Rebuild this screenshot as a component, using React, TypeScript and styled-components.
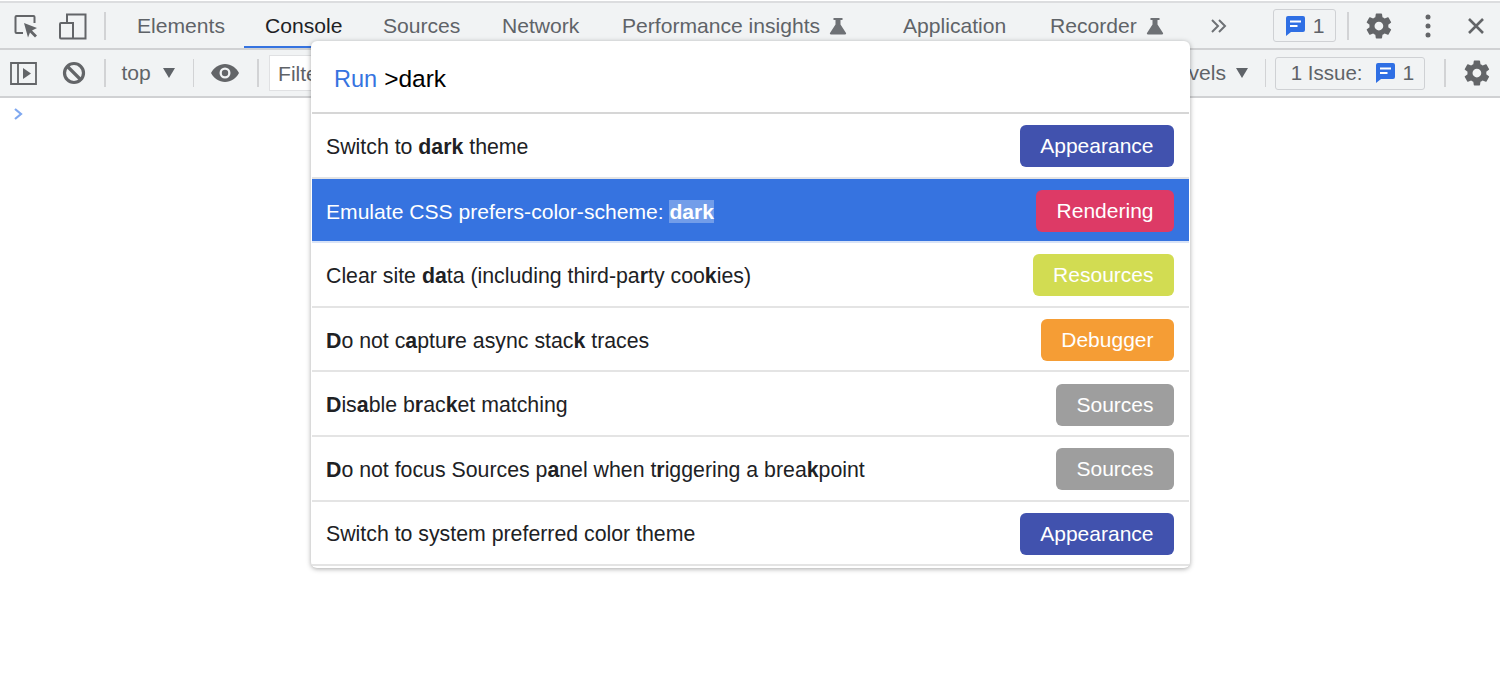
import React from 'react';
import styled, { createGlobalStyle } from 'styled-components';

const GlobalStyle = createGlobalStyle`
  html, body {
    margin: 0;
    padding: 0;
    background: #fff;
    font-family: "Liberation Sans", Arial, sans-serif;
  }
`;

const Page = styled.div`
  position: relative;
  width: 1500px;
  height: 699px;
  overflow: hidden;
  background: #fff;
`;

const Bar = styled.div<{ $height: number }>`
  display: flex;
  align-items: center;
  height: ${p => p.$height}px;
  background: #f1f3f4;
  border-bottom: 2px solid #d0d1d3;
  box-sizing: border-box;
  color: #5f6368;
  font-size: 21.1px;
`;

const TabBar = styled(Bar)`
  margin-top: 1px;
  border-top: 2px solid #dcdddf;
  padding-left: 12px;
`;

const ToolBar = styled(Bar)`
  padding: 0 8.5px 0 10px;
`;

const IconSlot = styled.span<{ $width: number; $gap?: number }>`
  display: flex;
  align-items: center;
  justify-content: center;
  flex: none;
  width: ${p => p.$width}px;
  margin-right: ${p => p.$gap ?? 0}px;
`;

const Divider = styled.span<{ $left: number; $right: number }>`
  flex: none;
  width: 1.5px;
  height: 28px;
  background: #d2d3d5;
  margin: 0 ${p => p.$right}px 0 ${p => p.$left}px;
`;

const Tabs = styled.div`
  display: flex;
  align-self: stretch;
`;

const Tab = styled.div<{ $active?: boolean; $width: number }>`
  display: flex;
  align-items: center;
  gap: 9px;
  box-sizing: border-box;
  width: ${p => p.$width}px;
  padding: 1px 0 0 21px;
  white-space: nowrap;
  color: ${p => (p.$active ? '#202124' : '#5f6368')};
  box-shadow: ${p => (p.$active ? 'inset 0 -2px 0 #3673e0' : 'none')};
`;

const Chip = styled.div<{ $width: number; $left?: number; $inset?: number }>`
  display: flex;
  align-items: center;
  justify-content: center;
  gap: 7px;
  flex: none;
  box-sizing: border-box;
  width: ${p => p.$width}px;
  height: 33px;
  margin-left: ${p => p.$left ?? 0}px;
  padding-left: ${p => p.$inset ?? 0}px;
  border: 1.5px solid #cfd1d4;
  border-radius: 3px;
`;

const IssueLabel = styled.span`
  margin-right: 5px;
  font-size: 20.5px;
`;

const ContextLabel = styled.span`
  display: flex;
  align-items: center;
  gap: 11px;
  flex: none;
  width: 71px;
`;

const FilterBox = styled.div`
  flex: none;
  box-sizing: border-box;
  width: 300px;
  height: 36px;
  padding: 6px 8px;
  background: #fff;
  border: 1px solid #e0e1e3;
  white-space: nowrap;
  overflow: hidden;
`;

const Levels = styled.span`
  display: flex;
  align-items: center;
  gap: 9px;
  flex: none;
  margin-left: auto;
`;

const Prompt = styled.div`
  padding: 9px 0 0 13px;
  height: 20px;
`;

const Palette = styled.div`
  position: absolute;
  left: 311px;
  top: 41px;
  width: 879px;
  height: 527px;
  box-sizing: border-box;
  padding: 0 1px;
  background: #fff;
  border-radius: 6px;
  box-shadow: 0 1px 5px rgba(0, 0, 0, 0.35);
`;

const QueryRow = styled.div`
  box-sizing: border-box;
  height: 73px;
  padding: 24px 0 0 22px;
  border-bottom: 2px solid #d6d6d6;
  font-size: 24.5px;
  line-height: 27px;
  color: #000;
`;

const RunLabel = styled.span`
  font-size: 23.5px;
  color: #3673e0;
  margin-right: 7px;
`;

const Row = styled.div<{ $selected?: boolean }>`
  display: flex;
  align-items: center;
  justify-content: space-between;
  box-sizing: border-box;
  height: 64.6px;
  padding: 2px 15px 0 14px;
  color: ${p => (p.$selected ? '#fff' : '#202124')};
  background: ${p => (p.$selected ? '#3673e0' : '#fff')};
  border-bottom: 2px solid ${p => (p.$selected ? '#d8e3f7' : '#e4e4e4')};
`;

const RowLabel = styled.span<{ $selected?: boolean }>`
  padding-top: 2px;
  font-size: ${p => (p.$selected ? 21.1 : 21.3)}px;
`;

const Match = styled.b<{ $highlight?: boolean }>`
  background: ${p => (p.$highlight ? 'rgba(255, 255, 255, 0.3)' : 'transparent')};
`;

const Badge = styled.span<{ $color: string }>`
  display: flex;
  align-items: center;
  height: 42px;
  padding: 0 20.5px;
  border-radius: 6px;
  font-size: 21px;
  color: #fff;
  background: ${p => p.$color};
`;

const Caret = styled.svg`
  display: block;
  width: 14px;
  height: 12px;
  fill: #5f6368;
`;

const Arrow = () => (
  <Caret viewBox="0 0 14 12">
    <path d="M1 1h12L7 11z" />
  </Caret>
);

const Flask = () => (
  <svg width="18" height="18" viewBox="0 0 18 18" fill="#6e7175">
    <path d="M4.5 1h9v2H11.5v4.5L17 16a1 1 0 0 1-1 1.500H2A1 1 0 0 1 1 16l5.500-8.500V3H4.500z" />
  </svg>
);

const Gear = () => (
  <svg width="30" height="30" viewBox="0 0 24 24" fill="#636568">
    <path d="M19.4 13c.05-.33.08-.66.08-1s-.03-.67-.08-1l2.1-1.650a.5.5 0 0 0 .12-.64l-2-3.460a.5.5 0 0 0-.61-.22l-2.490 1a7.300 7.300 0 0 0-1.730-1l-.38-2.650A.5.5 0 0 0 13.920 2h-4a.5.5 0 0 0-.49.42l-.38 2.650a7.700 7.700 0 0 0-1.730 1l-2.490-1a.5.5 0 0 0-.61.22l-2 3.460a.5.5 0 0 0 .12.64L4.440 11c-.05.33-.08.67-.08 1s.03.67.08 1l-2.100 1.650a.5.5 0 0 0-.12.64l2 3.460c.12.22.39.3.61.22l2.490-1c.52.4 1.100.73 1.730 1l.38 2.650c.04.24.25.42.49.42h4c.24 0 .45-.18.49-.42l.38-2.650a7.700 7.700 0 0 0 1.730-1l2.490 1c.22.08.49 0 .61-.22l2-3.460a.5.5 0 0 0-.12-.64zM11.920 15.500a3.500 3.500 0 1 1 0-7 3.500 3.500 0 0 1 0 7z" />
  </svg>
);

const Message = () => (
  <svg width="21" height="22" viewBox="0 0 21 22">
    <path fill="#2f6fe4" d="M3 1h15a2 2 0 0 1 2 2v12a2 2 0 0 1-2 2H6l-5 4V3a2 2 0 0 1 2-2z" />
    <path fill="#fff" d="M5 5.500h11v2H5zM5 10h7.500v2H5z" />
  </svg>
);

const tabs = [
  { name: 'Elements', width: 128 },
  { name: 'Console', width: 118, active: true },
  { name: 'Sources', width: 119 },
  { name: 'Network', width: 120 },
  { name: 'Performance insights', width: 281, flask: true },
  { name: 'Application', width: 147 },
  { name: 'Recorder', width: 179, flask: true },
];

const rows: { parts: (string | [string])[]; badge: string; color: string; selected?: boolean }[] = [
  { parts: ['Switch to ', ['dark'], ' theme'], badge: 'Appearance', color: '#4152ae' },
  { parts: ['Emulate CSS prefers-color-scheme: ', ['dark']], badge: 'Rendering', color: '#dd3a66', selected: true },
  { parts: ['Clear site ', ['da'], 'ta (including third-pa', ['r'], 'ty coo', ['k'], 'ies)'], badge: 'Resources', color: '#d2dc52' },
  { parts: [['D'], 'o not c', ['a'], 'ptu', ['r'], 'e async stac', ['k'], ' traces'], badge: 'Debugger', color: '#f59d35' },
  { parts: [['D'], 'is', ['a'], 'ble b', ['r'], 'ac', ['k'], 'et matching'], badge: 'Sources', color: '#9e9e9e' },
  { parts: [['D'], 'o not focus Sources p', ['a'], 'nel when t', ['r'], 'iggering a brea', ['k'], 'point'], badge: 'Sources', color: '#9e9e9e' },
  { parts: ['Switch to system preferred color theme'], badge: 'Appearance', color: '#4152ae' },
];

const App = () => (
  <Page>
    <GlobalStyle />
    <TabBar $height={49}>
      <IconSlot $width={28} $gap={19}>
        <svg width="26" height="26" viewBox="0 0 26 26" fill="none">
          <path d="M10 20H3.500a1 1 0 0 1-1-1V4a1 1 0 0 1 1-1h17a1 1 0 0 1 1 1v6" stroke="#636568" strokeWidth="2" />
          <path d="M11 10l13 5-5 2.500 5 5-2 2-5-5-2 5z" fill="#636568" />
        </svg>
      </IconSlot>
      <IconSlot $width={28}>
        <svg width="28" height="28" viewBox="0 0 28 28" fill="none" stroke="#636568" strokeWidth="2">
          <path d="M8 11V2.500h18.500v24H2a1 1 0 0 1-1-1V12a1 1 0 0 1 1-1h12v15.500" />
        </svg>
      </IconSlot>
      <Divider $left={17} $right={10.5} />
      <Tabs>
        {tabs.map(t => (
          <Tab key={t.name} $active={t.active} $width={t.width}>
            {t.name}
            {t.flask && <Flask />}
          </Tab>
        ))}
      </Tabs>
      <IconSlot $width={22}>
        <svg width="18" height="16" viewBox="0 0 18 16" fill="none" stroke="#6e7175" strokeWidth="2">
          <path d="M2 2l6 6-6 6M9 2l6 6-6 6" />
        </svg>
      </IconSlot>
      <Chip $width={63} $left={43}>
        <Message />
        1
      </Chip>
      <Divider $left={11} $right={0} />
      <IconSlot $width={61}>
        <Gear />
      </IconSlot>
      <IconSlot $width={37}>
        <svg width="6" height="24" viewBox="0 0 6 24" fill="#636568">
          <circle cx="3" cy="3" r="2.500" />
          <circle cx="3" cy="12" r="2.500" />
          <circle cx="3" cy="21" r="2.500" />
        </svg>
      </IconSlot>
      <IconSlot $width={59}>
        <svg width="18" height="18" viewBox="0 0 18 18" stroke="#636568" strokeWidth="2.600">
          <path d="M2 2l14 14M16 2L2 16" />
        </svg>
      </IconSlot>
    </TabBar>
    <ToolBar $height={48}>
      <IconSlot $width={27} $gap={25}>
        <svg width="27" height="23" viewBox="0 0 27 23" fill="none" stroke="#636568" strokeWidth="1.800">
          <path d="M1 1h25v21H1zM8 1v21" />
          <path d="M13 6l8 5.500-8 5.500z" fill="#636568" stroke="none" />
        </svg>
      </IconSlot>
      <IconSlot $width={24}>
        <svg width="24" height="24" viewBox="0 0 24 24" fill="none" stroke="#636568" strokeWidth="3.200">
          <circle cx="12" cy="12" r="9.500" />
          <path d="M5 5l14 14" />
        </svg>
      </IconSlot>
      <Divider $left={18} $right={16} />
      <ContextLabel>
        top
        <Arrow />
      </ContextLabel>
      <Divider $left={0} $right={17} />
      <IconSlot $width={28}>
        <svg width="28" height="18" viewBox="0 0 28 18">
          <path fill="#636568" d="M14 0C8 0 3 3.700 0 9c3 5.300 8 9 14 9s11-3.700 14-9c-3-5.300-8-9-14-9z" />
          <circle cx="14" cy="9" r="5.500" fill="#f1f3f4" />
          <circle cx="14" cy="9" r="3.200" fill="#636568" />
        </svg>
      </IconSlot>
      <Divider $left={18} $right={10.5} />
      <FilterBox>Filter</FilterBox>
      <Levels>
        Default levels
        <Arrow />
      </Levels>
      <Divider $left={15.5} $right={9} />
      <Chip $width={150} $inset={5}>
        <IssueLabel>1 Issue:</IssueLabel>
        <Message />
        1
      </Chip>
      <Divider $left={19} $right={16} />
      <IconSlot $width={30}>
        <Gear />
      </IconSlot>
    </ToolBar>
    <Prompt>
      <svg width="12" height="14" viewBox="0 0 12 14" fill="none" stroke="#7fa8f0" strokeWidth="2.200">
        <path d="M2 2l6 5-6 5" />
      </svg>
    </Prompt>
    <Palette>
      <QueryRow>
        <RunLabel>Run</RunLabel>
        &gt;dark
      </QueryRow>
      {rows.map((r, i) => (
        <Row key={i} $selected={r.selected}>
          <RowLabel $selected={r.selected}>
            {r.parts.map((part, j) =>
              typeof part === 'string' ? (
                part
              ) : (
                <Match key={j} $highlight={r.selected}>
                  {part[0]}
                </Match>
              ),
            )}
          </RowLabel>
          <Badge $color={r.color}>{r.badge}</Badge>
        </Row>
      ))}
    </Palette>
  </Page>
);

export default App;
